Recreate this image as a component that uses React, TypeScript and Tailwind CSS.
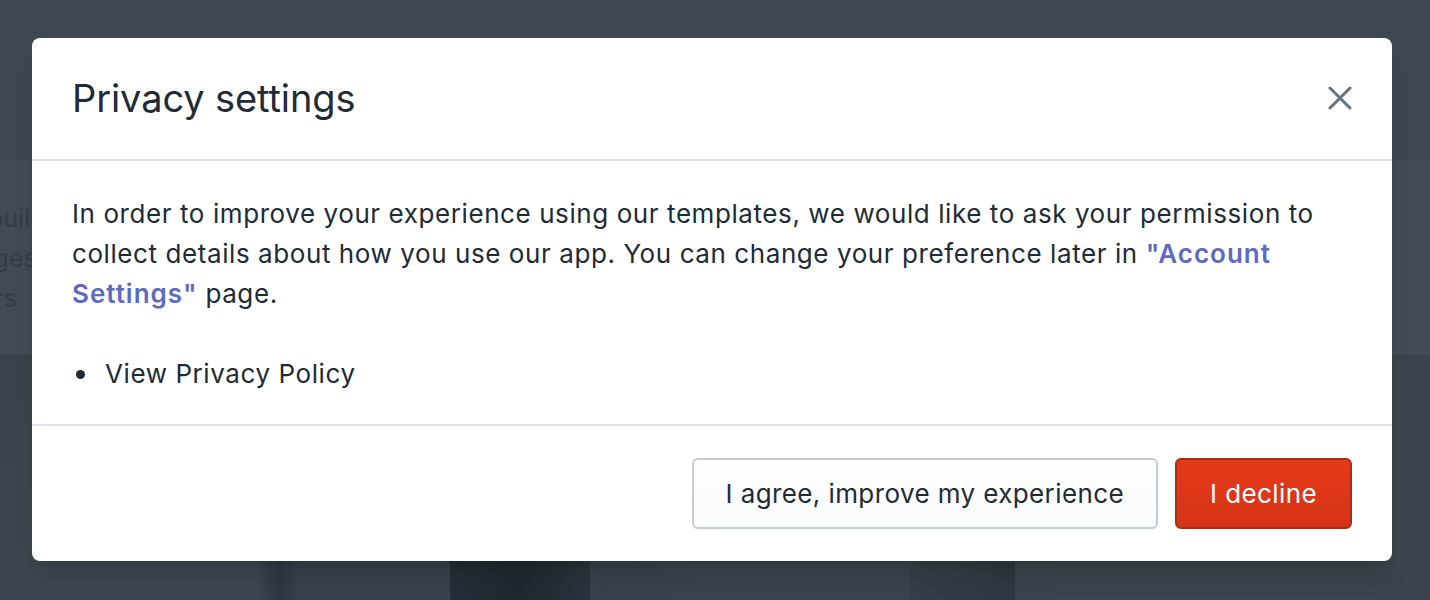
import React from "react";

export default function App() {
  const font = { fontFamily: "Inter, 'Noto Sans', 'Liberation Sans', sans-serif" };
  return (
    <div className="relative w-[1430px] h-[600px] overflow-hidden bg-[#3e4751]" style={font}>
      {/* background page, dimmed */}
      <div className="flex flex-col h-full">
        <div className="h-[160px] bg-[#3e4751]" />
        <div className="h-[195px] bg-[#424b55] flex flex-col justify-center text-[25px] leading-[40px] text-[#343c46] -ml-[12px]">
          <span className="block">build</span>
          <span className="block -ml-[24px]">pages</span>
          <span className="block -ml-[36px]">users</span>
        </div>
        <div className="flex flex-1">
          <div className="w-[1015px] flex bg-[#3d454f]">
            <div className="w-[260px] bg-gradient-to-b from-[#3a424c] to-[#3d4650]" />
            <div className="w-[40px] bg-gradient-to-r from-[#3a424c] via-[#2f3640] to-[#39414b]" />
            <div className="w-[150px] bg-[#39414b]" />
            <div className="w-[140px] bg-gradient-to-r from-[#262d36] via-[#20272f] to-[#2b323b]" />
            <div className="w-[120px] bg-gradient-to-r from-[#38404a] to-[#3a424c]" />
            <div className="w-[200px] bg-[#3a424c]" />
            <div className="flex-1 bg-gradient-to-r from-[#363e47] to-[#2f363f]" />
          </div>
          <div className="w-[40px] bg-[#3a424b]" />
          <div className="flex-1 bg-[#3b434c]" />
        </div>
      </div>

      {/* modal */}
      <div className="absolute left-[32px] top-[38px] w-[1360px] h-[523px] bg-white rounded-[8px] shadow-xl flex flex-col text-[#212b36]">
        <div className="h-[123px] px-[40px] flex items-center justify-between border-b-2 border-[#dfe3e8] pb-[2px]">
          <h2 className="text-[38px] leading-[48px] font-normal tracking-[-0.1px]">Privacy settings</h2>
          <button className="w-[24px] h-[24px] flex items-center justify-center text-[#637381]">
            <svg width="24" height="24" viewBox="0 0 24 24" fill="none" stroke="currentColor" strokeWidth="3" strokeLinecap="round">
              <path d="M2 2 L22 22 M22 2 L2 22" />
            </svg>
          </button>
        </div>
        <div className="h-[265px] px-[40px] pt-[33px] border-b-2 border-[#dfe3e8] text-[26px] tracking-[0.58px] leading-[40px]">
          <p>
            In order to improve your experience using our templates, we would like to ask your permission to collect details about how you use our app. You can change your preference later in{" "}
            <span className="font-semibold tracking-[1px] text-[#5c6ac4]">"Account Settings"</span> page.
          </p>
          <ul className="mt-[40px] pl-[0px]">
            <li className="flex items-center">
              <span className="w-[9px] h-[9px] rounded-full bg-[#212b36] ml-[4px] mr-[20px]" />
              View Privacy Policy
            </li>
          </ul>
        </div>
        <div className="flex-1 px-[40px] flex items-center justify-end gap-[17px]">
          <button className="h-[71px] px-[32px] rounded-[6px] border-2 border-[#c4cdd5] bg-gradient-to-b from-white to-[#f9fafb] text-[26px] tracking-[0.4px] text-[#212b36] shadow-[0_1px_0_0_rgba(22,29,37,0.05)]">
            I agree, improve my experience
          </button>
          <button className="h-[71px] px-[33px] rounded-[6px] border-2 border-[#b02b13] bg-gradient-to-b from-[#e6391a] to-[#d53417] text-[26px] tracking-[0.4px] text-white">
            I decline
          </button>
        </div>
      </div>
    </div>
  );
}
